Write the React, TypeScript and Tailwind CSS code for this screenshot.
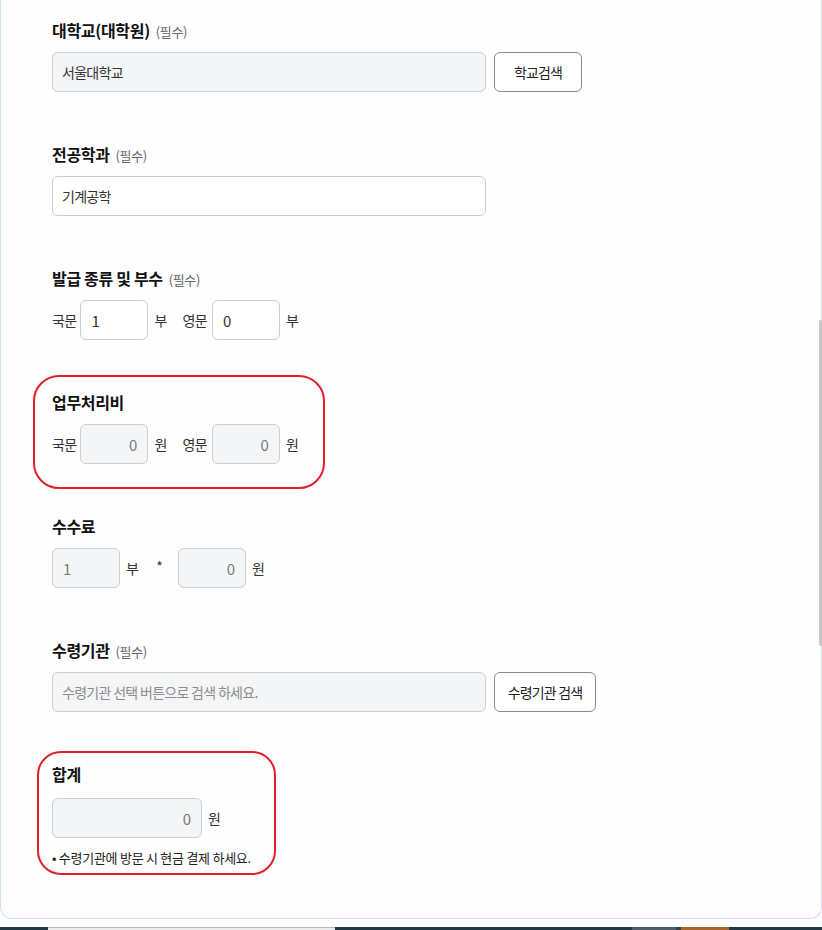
import React from "react";

const font = { fontFamily: '"Noto Sans CJK KR", "Noto Sans", sans-serif' };

function Label({ text, required }: { text: string; required?: boolean }) {
  return (
    <div className="flex h-5 items-baseline leading-[16px]">
      <span className="text-[16px] font-bold tracking-[-0.02em] text-[#111]">{text}</span>
      {required && (
        <span className="ml-[6px] text-[13px] tracking-[-0.03em] text-[#666]">(필수)</span>
      )}
    </div>
  );
}

function Field({
  value,
  placeholder,
  gray,
  right,
  dim,
  num,
  className,
}: {
  value?: string;
  placeholder?: string;
  gray?: boolean;
  right?: boolean;
  dim?: boolean;
  num?: boolean;
  className: string;
}) {
  return (
    <input
      readOnly
      value={value ?? ""}
      placeholder={placeholder}
      className={
        "h-10 rounded-[6px] border border-[#cdcdcd] outline-none placeholder:text-[#8c8c8c] " +
        (num ? "px-[10px] text-[15px] " : "px-[9px] text-[14px] tracking-[-0.05em] ") +
        (gray ? "bg-[#f4f5f7] " : "bg-white ") +
        (right ? "text-right " : "text-left ") +
        (dim ? "text-[#7a7a7a] " : "text-[#333] ") +
        className
      }
    />
  );
}

function Btn({ children, className }: { children: React.ReactNode; className: string }) {
  return (
    <button
      className={
        "h-10 rounded-[6px] border border-[#8a8a8a] bg-white text-[14px] tracking-[-0.06em] text-[#222] " +
        className
      }
    >
      {children}
    </button>
  );
}

function Txt({ children, className = "" }: { children: React.ReactNode; className?: string }) {
  return <span className={"text-[14px] tracking-[-0.05em] text-[#333] " + className}>{children}</span>;
}

export default function App() {
  return (
    <div className="relative h-[930px] overflow-hidden bg-white" style={font}>
      {/* card */}
      <div className="h-[919px] rounded-b-[12px] border-x border-b border-[#d3def4] bg-[#fefefe] pl-[51px] pt-[22px]">
        {/* 대학교 */}
        <Label text="대학교(대학원)" required />
        <div className="mt-[10px] flex">
          <Field value="서울대학교" gray className="w-[434px]" />
          <Btn className="ml-[8px] w-[88px]">학교검색</Btn>
        </div>

        {/* 전공학과 */}
        <div className="mt-[54px]">
          <Label text="전공학과" required />
          <div className="mt-[10px] flex">
            <Field value="기계공학" className="w-[434px]" />
          </div>
        </div>

        {/* 발급 종류 및 부수 */}
        <div className="mt-[54px]">
          <Label text="발급 종류 및 부수" required />
          <div className="mt-[10px] flex items-center">
            <Txt>국문</Txt>
            <Field value="1" num className="ml-[4px] w-[68px] text-[#222]" />
            <Txt className="ml-[6px]">부</Txt>
            <Txt className="ml-[16px]">영문</Txt>
            <Field value="0" num className="ml-[5px] w-[68px]" />
            <Txt className="ml-[6px]">부</Txt>
          </div>
        </div>

        {/* 업무처리비 */}
        <div className="mt-[54px]">
          <div className="-mb-[25px] -ml-[19px] -mt-[19px] w-[292px] rounded-[26px] border-2 border-[#e41e2a] pb-[23px] pl-[17px] pt-[17px]">
            <Label text="업무처리비" />
            <div className="mt-[10px] flex items-center">
              <Txt>국문</Txt>
              <Field value="0" num gray right dim className="ml-[4px] w-[68px]" />
              <Txt className="ml-[6px]">원</Txt>
              <Txt className="ml-[16px]">영문</Txt>
              <Field value="0" num gray right dim className="ml-[5px] w-[68px]" />
              <Txt className="ml-[6px]">원</Txt>
            </div>
          </div>
        </div>

        {/* 수수료 */}
        <div className="mt-[54px]">
          <Label text="수수료" />
          <div className="mt-[10px] flex items-center">
            <Field value="1" num gray dim className="w-[68px]" />
            <Txt className="ml-[6px]">부</Txt>
            <Txt className="ml-[18px] -mt-[4px]">*</Txt>
            <Field value="0" num gray right dim className="ml-[16px] w-[68px]" />
            <Txt className="ml-[6px]">원</Txt>
          </div>
        </div>

        {/* 수령기관 */}
        <div className="mt-[54px]">
          <Label text="수령기관" required />
          <div className="mt-[10px] flex">
            <Field placeholder="수령기관 선택 버튼으로 검색 하세요." gray className="w-[434px]" />
            <Btn className="ml-[8px] w-[102px]">수령기관 검색</Btn>
          </div>
        </div>

        {/* 합계 */}
        <div className="mt-[54px]">
          <div className="-mb-[8px] -ml-[15px] -mt-[15px] w-[239px] rounded-[24px] border-2 border-[#e41e2a] pb-[6px] pl-[13px] pt-[13px]">
            <Label text="합계" />
            <div className="mt-[12px] flex items-center">
              <Field value="0" num gray right dim className="w-[150px]" />
              <Txt className="ml-[6px]">원</Txt>
            </div>
            <p className="mt-[11px] h-[18px] text-[13px] leading-[18px] tracking-[-0.02em] text-[#222]">
              • 수령기관에 방문 시 현금 결제 하세요.
            </p>
          </div>
        </div>
      </div>

      {/* bottom strip */}
      <div className="mt-[8px] flex h-[3px]">
        <div className="w-[48px] bg-[#243944]" />
        <div className="w-[287px] border-t border-[#b9b9b9] bg-[#ececec]" />
        <div className="w-[297px] bg-[#243944]" />
        <div className="w-[44px] bg-[#4e5d67]" />
        <div className="w-[5px] bg-[#33434d]" />
        <div className="w-[48px] bg-[#a8652e]" />
        <div className="flex-1 bg-[#243944]" />
      </div>

      {/* scrollbar thumb */}
      <div className="absolute right-0 top-[320px] h-[326px] w-[3px] rounded-l-[2px] bg-[#c8c8c8]" />
    </div>
  );
}
